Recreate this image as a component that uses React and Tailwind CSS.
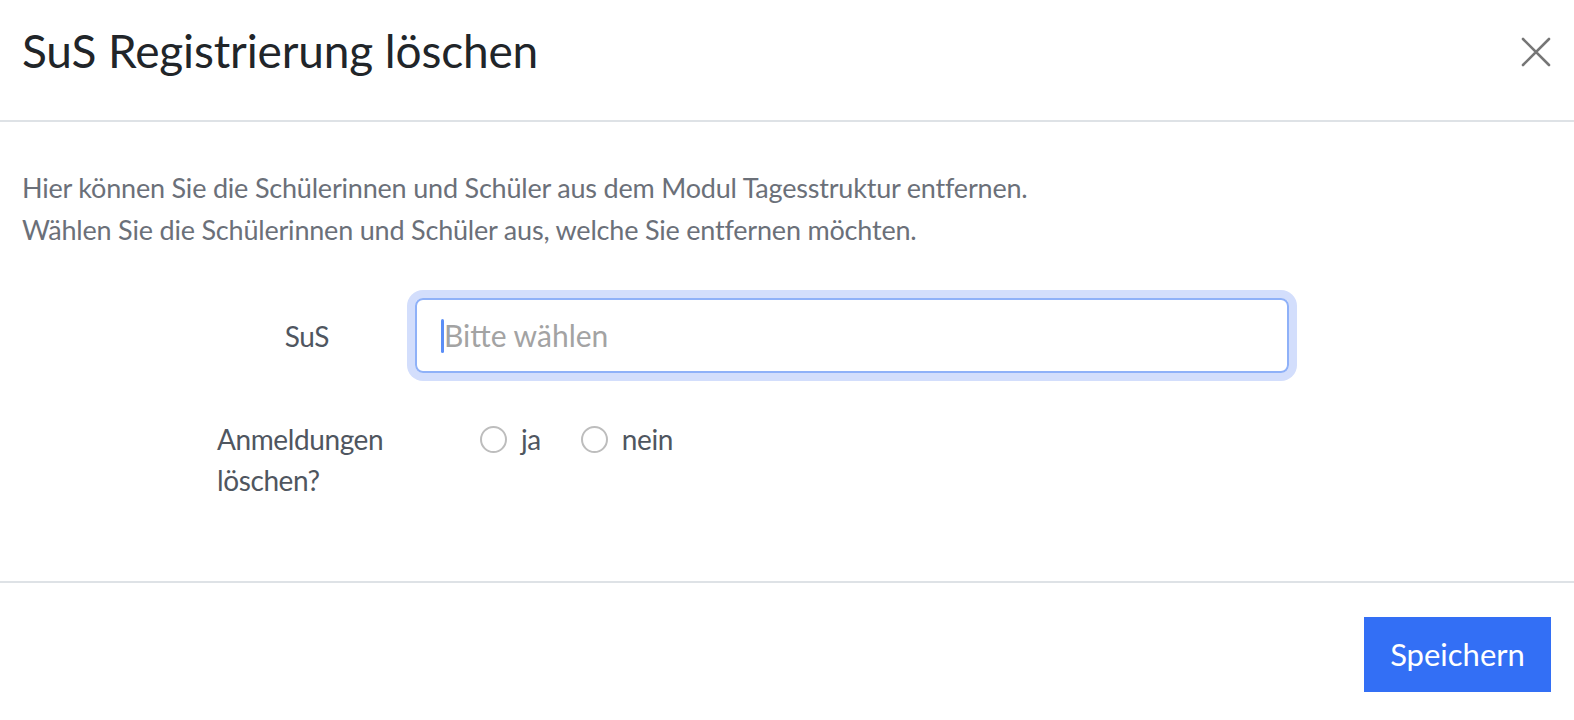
import React, { useState } from 'react';

const font = { fontFamily: '"Lato", "Liberation Sans", sans-serif' };

function Radio({ label, checked, onChange }) {
  return (
    <label className="flex items-center cursor-pointer">
      <span className="w-[27px] h-[27px] rounded-full border-2 border-[#bdbdbd] bg-white flex items-center justify-center">
        {checked && <span className="w-[13px] h-[13px] rounded-full bg-[#336ff5]" />}
      </span>
      <input type="radio" className="hidden" checked={checked} onChange={onChange} />
      <span className="ml-[14px] text-[28px] leading-[42px] tracking-[-0.4px] text-[#4f5660]">{label}</span>
    </label>
  );
}

export default function App() {
  const [choice, setChoice] = useState(null);

  return (
    <div className="w-[1574px] h-[720px] bg-white flex flex-col text-[#212529]" style={font}>
      {/* header */}
      <div className="h-[122px] border-b-2 border-[#dee2e6] flex items-center justify-between pl-[22px] pr-[23px] shrink-0">
        <h1 className="text-[46px] leading-[54px] tracking-[-0.15px] text-[#212529] -mt-[18px]">SuS Registrierung löschen</h1>
        <button className="w-[30px] h-[30px] flex items-center justify-center -mt-[16px]">
          <svg width="30" height="30" viewBox="0 0 30 30" fill="none" stroke="#767676" strokeWidth="2.6" strokeLinecap="round">
            <path d="M2 2 L28 28 M28 2 L2 28" />
          </svg>
        </button>
      </div>

      {/* body */}
      <div className="h-[461px] border-b-2 border-[#dee2e6] pl-[22px] pt-[45px] shrink-0">
        <p className="text-[27px] leading-[42px] tracking-[-0.2px] text-[#6b7079]">
          Hier können Sie die Schülerinnen und Schüler aus dem Modul Tagesstruktur entfernen.
          <br />
          Wählen Sie die Schülerinnen und Schüler aus, welche Sie entfernen möchten.
        </p>

        <div className="flex items-center mt-[47px]">
          <div className="w-[393px] text-[28px] leading-[42px] tracking-[-0.4px] text-[#4f5660] text-right pr-[86px]">SuS</div>
          <div className="w-[874px] h-[75px] rounded-[8px] border-2 border-[#8fb1f8] ring-[8px] ring-[#d3defc] flex items-center pl-[24px]">
            <span className="w-[3px] h-[34px] bg-[#5b8ef7] rounded-full" />
            <input
              className="flex-1 outline-none text-[30px] text-[#333] placeholder:text-[#a3a3a3] bg-transparent"
              placeholder="Bitte wählen"
              style={font}
            />
          </div>
        </div>

        <div className="flex mt-[46px]">
          <div className="w-[458px] pl-[195px] text-[28px] leading-[41px] tracking-[-0.4px] text-[#4f5660]">
            Anmeldungen
            <br />
            löschen?
          </div>
          <div className="flex items-start gap-[40px] -mt-[1px]">
            <Radio label="ja" checked={choice === 'ja'} onChange={() => setChoice('ja')} />
            <Radio label="nein" checked={choice === 'nein'} onChange={() => setChoice('nein')} />
          </div>
        </div>
      </div>

      {/* footer */}
      <div className="flex-1 flex items-start justify-end pr-[23px] pt-[34px]">
        <button className="w-[187px] h-[75px] bg-[#336ff5] text-white text-[31px]" style={font}>
          Speichern
        </button>
      </div>
    </div>
  );
}
